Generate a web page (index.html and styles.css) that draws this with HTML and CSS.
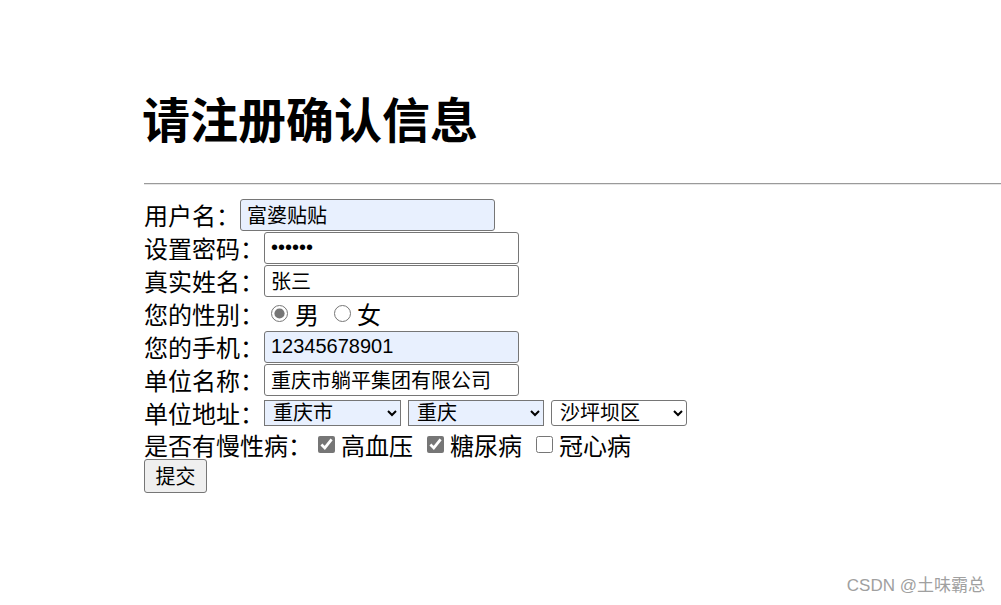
FILE: index.html
```html
<!DOCTYPE html>
<html lang="zh-CN">
<head>
<meta charset="utf-8">
<title>请注册确认信息</title>
<link rel="stylesheet" href="styles.css">
</head>
<body>
<div class="page">
  <h1 class="title">请注册确认信息</h1>
  <hr class="rule">
  <form class="form">
    <div class="row"><span class="label">用户名：</span><input class="field autofill" type="text" value="富婆贴贴"></div>
    <div class="row"><span class="label">设置密码：</span><input class="field latin" type="password" value="123456"></div>
    <div class="row"><span class="label">真实姓名：</span><input class="field" type="text" value="张三"></div>
    <div class="row"><span class="label">您的性别：</span><input class="radio first" type="radio" name="sex" checked><span class="opt">男</span><input class="radio next" type="radio" name="sex"><span class="opt">女</span></div>
    <div class="row"><span class="label">您的手机：</span><input class="field autofill latin" type="text" value="12345678901"></div>
    <div class="row"><span class="label">单位名称：</span><input class="field" type="text" value="重庆市躺平集团有限公司"></div>
    <div class="row"><span class="label">单位地址：</span><select class="sel sel-a autofill"><option>重庆市</option></select><select class="sel sel-b autofill"><option>重庆</option></select><select class="sel sel-c"><option>沙坪坝区</option></select></div>
    <div class="row short"><span class="label">是否有慢性病：</span><input class="check first" type="checkbox" checked><span class="opt">高血压</span><input class="check next" type="checkbox" checked><span class="opt">糖尿病</span><input class="check next" type="checkbox"><span class="opt">冠心病</span></div>
    <div class="row short"><button class="btn" type="button">提交</button></div>
  </form>
</div>
<div class="mark">CSDN @土味霸总</div>
</body>
</html>
```
FILE: styles.css
```css
html, body {
  margin: 0;
  padding: 0;
  background: #fff;
}
body {
  font-family: "Noto Sans CJK SC", "Liberation Sans", sans-serif;
  color: #000;
  width: 1001px;
  height: 605px;
  overflow: hidden;
  position: relative;
}
.page {
  padding: 93px 0 0 144px;
}
.title {
  margin: 0 0 0 -2px;
  font-size: 48px;
  line-height: 48px;
  font-weight: 700;
}
.rule {
  margin: 42px 0 0 0;
  border: 0;
  border-top: 1px solid #9a9a9a;
  border-bottom: 1px solid #e6e6e6;
  height: 0;
}
.form {
  margin-top: 13px;
  display: flex;
  flex-direction: column;
}
.row {
  height: 33px;
  display: flex;
  align-items: center;
  font-size: 24px;
  white-space: nowrap;
}
.row.short {
  height: 31px;
}
.label {
  line-height: 24px;
}
.opt {
  line-height: 24px;
}
.field {
  box-sizing: border-box;
  width: 255px;
  height: 32px;
  margin: 0;
  padding: 0 6px;
  border: 1px solid #767676;
  border-radius: 3px;
  font-family: "Noto Sans CJK SC", "Liberation Sans", sans-serif;
  font-size: 20px;
  color: #000;
  background: #fff;
  outline: none;
}
.field.latin {
  font-family: "Liberation Sans", "Noto Sans CJK SC", sans-serif;
}
.autofill {
  background-color: #e8f0fe;
}
.radio, .check {
  width: 17px;
  height: 17px;
  margin: 0 6px 0 0;
  accent-color: #767676;
}
.radio.first { margin-left: 7px; margin-right: 7px; }
.radio.next { margin-left: 15px; }
.check.first { margin-left: 6px; }
.check.next { margin-left: 14px; }
.sel {
  box-sizing: border-box;
  height: 26px;
  margin: 0;
  padding: 0 4px 1px 4px;
  border: 1px solid #767676;
  font-family: "Liberation Sans", "Noto Sans CJK SC", sans-serif;
  font-size: 20px;
  line-height: 22px;
  color: #000;
  background-color: #fff;
}
.sel-a { width: 137px; border-radius: 0; background-color: #e8f0fe; }
.sel-b { width: 136px; margin-left: 7px; border-radius: 0; background-color: #e8f0fe; }
.sel-c { width: 136px; margin-left: 7px; border-radius: 3px; }
.btn {
  box-sizing: border-box;
  width: 63px;
  height: 34px;
  margin: 0;
  padding: 0;
  border: 1px solid #767676;
  border-radius: 3px;
  background: #efefef;
  font-family: "Noto Sans CJK SC", "Liberation Sans", sans-serif;
  font-size: 20px;
  color: #000;
}
.mark {
  position: absolute;
  right: 16px;
  top: 574px;
  font-family: "Liberation Sans", "Noto Sans CJK SC", sans-serif;
  font-size: 17px;
  line-height: 24px;
  color: #a0a0a0;
}
```
